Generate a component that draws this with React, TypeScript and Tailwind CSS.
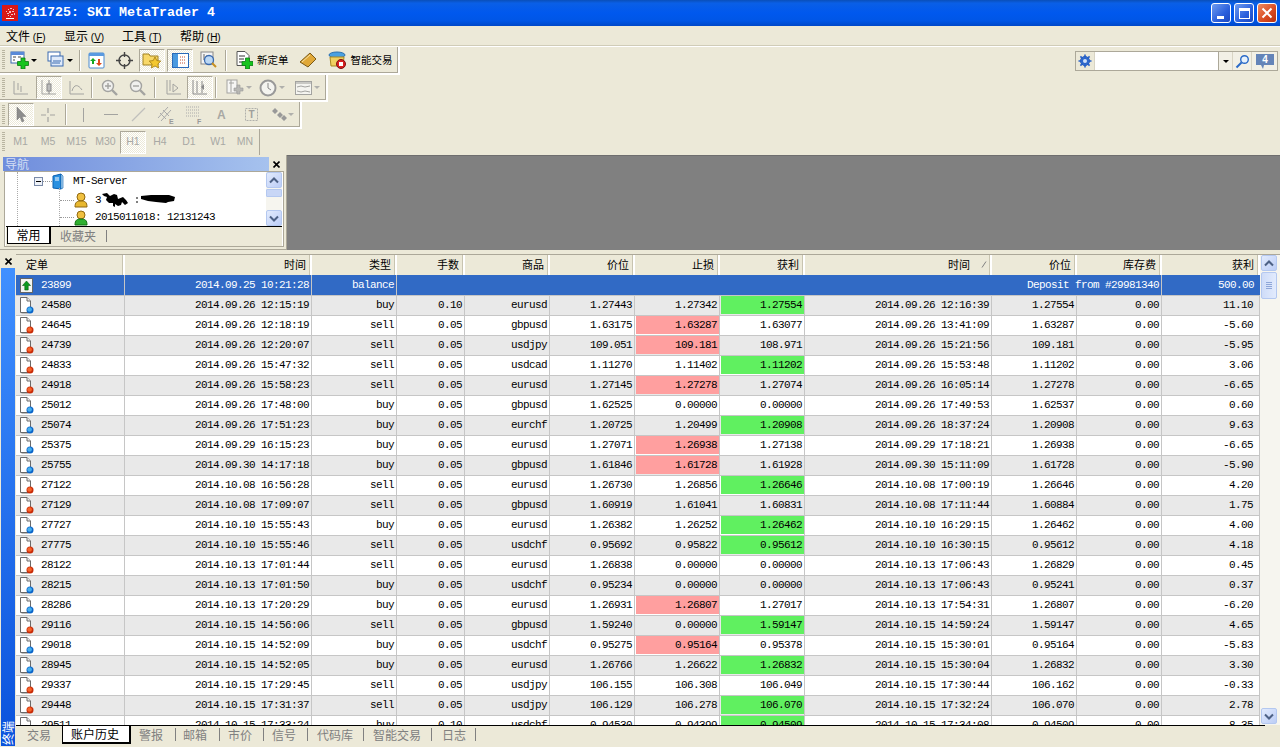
import React from "react";

const MONO = "font-['Liberation_Mono',monospace] text-[11px] tracking-[-0.6px]";
const CJK = "font-['Noto_Sans_CJK_SC','Liberation_Sans',sans-serif]";
const TOGGLED =
  "bg-[repeating-conic-gradient(#ece9d8_0%_25%,#ffffff_0%_50%)] bg-[length:2px_2px] border border-t-[#aca899] border-l-[#aca899] border-r-white border-b-white";

type Hl = "" | "sl" | "tp";
type Row = [string, string, string, string, string, string, string, string, string, string, string, string, Hl];

const rows: Row[] = [
  ["24580", "2014.09.26 12:15:19", "buy", "0.10", "eurusd", "1.27443", "1.27342", "1.27554", "2014.09.26 12:16:39", "1.27554", "0.00", "11.10", "tp"],
  ["24645", "2014.09.26 12:18:19", "sell", "0.05", "gbpusd", "1.63175", "1.63287", "1.63077", "2014.09.26 13:41:09", "1.63287", "0.00", "-5.60", "sl"],
  ["24739", "2014.09.26 12:20:07", "sell", "0.05", "usdjpy", "109.051", "109.181", "108.971", "2014.09.26 15:21:56", "109.181", "0.00", "-5.95", "sl"],
  ["24833", "2014.09.26 15:47:32", "sell", "0.05", "usdcad", "1.11270", "1.11402", "1.11202", "2014.09.26 15:53:48", "1.11202", "0.00", "3.06", "tp"],
  ["24918", "2014.09.26 15:58:23", "sell", "0.05", "eurusd", "1.27145", "1.27278", "1.27074", "2014.09.26 16:05:14", "1.27278", "0.00", "-6.65", "sl"],
  ["25012", "2014.09.26 17:48:00", "buy", "0.05", "gbpusd", "1.62525", "0.00000", "0.00000", "2014.09.26 17:49:53", "1.62537", "0.00", "0.60", ""],
  ["25074", "2014.09.26 17:51:23", "buy", "0.05", "eurchf", "1.20725", "1.20499", "1.20908", "2014.09.26 18:37:24", "1.20908", "0.00", "9.63", "tp"],
  ["25375", "2014.09.29 16:15:23", "buy", "0.05", "eurusd", "1.27071", "1.26938", "1.27138", "2014.09.29 17:18:21", "1.26938", "0.00", "-6.65", "sl"],
  ["25755", "2014.09.30 14:17:18", "buy", "0.05", "gbpusd", "1.61846", "1.61728", "1.61928", "2014.09.30 15:11:09", "1.61728", "0.00", "-5.90", "sl"],
  ["27122", "2014.10.08 16:56:28", "sell", "0.05", "eurusd", "1.26730", "1.26856", "1.26646", "2014.10.08 17:00:19", "1.26646", "0.00", "4.20", "tp"],
  ["27129", "2014.10.08 17:09:07", "sell", "0.05", "gbpusd", "1.60919", "1.61041", "1.60831", "2014.10.08 17:11:44", "1.60884", "0.00", "1.75", ""],
  ["27727", "2014.10.10 15:55:43", "buy", "0.05", "eurusd", "1.26382", "1.26252", "1.26462", "2014.10.10 16:29:15", "1.26462", "0.00", "4.00", "tp"],
  ["27775", "2014.10.10 15:55:46", "sell", "0.05", "usdchf", "0.95692", "0.95822", "0.95612", "2014.10.10 16:30:15", "0.95612", "0.00", "4.18", "tp"],
  ["28122", "2014.10.13 17:01:44", "sell", "0.05", "eurusd", "1.26838", "0.00000", "0.00000", "2014.10.13 17:06:43", "1.26829", "0.00", "0.45", ""],
  ["28215", "2014.10.13 17:01:50", "buy", "0.05", "usdchf", "0.95234", "0.00000", "0.00000", "2014.10.13 17:06:43", "0.95241", "0.00", "0.37", ""],
  ["28286", "2014.10.13 17:20:29", "buy", "0.05", "eurusd", "1.26931", "1.26807", "1.27017", "2014.10.13 17:54:31", "1.26807", "0.00", "-6.20", "sl"],
  ["29116", "2014.10.15 14:56:06", "sell", "0.05", "gbpusd", "1.59240", "0.00000", "1.59147", "2014.10.15 14:59:24", "1.59147", "0.00", "4.65", "tp"],
  ["29018", "2014.10.15 14:52:09", "buy", "0.05", "usdchf", "0.95275", "0.95164", "0.95378", "2014.10.15 15:30:01", "0.95164", "0.00", "-5.83", "sl"],
  ["28945", "2014.10.15 14:52:05", "buy", "0.05", "eurusd", "1.26766", "1.26622", "1.26832", "2014.10.15 15:30:04", "1.26832", "0.00", "3.30", "tp"],
  ["29337", "2014.10.15 17:29:45", "sell", "0.05", "usdjpy", "106.155", "106.308", "106.049", "2014.10.15 17:30:44", "106.162", "0.00", "-0.33", ""],
  ["29448", "2014.10.15 17:31:37", "sell", "0.05", "usdjpy", "106.129", "106.278", "106.070", "2014.10.15 17:32:24", "106.070", "0.00", "2.78", "tp"],
  ["29511", "2014.10.15 17:33:24", "buy", "0.10", "usdchf", "0.94530", "0.94399", "0.94509", "2014.10.15 17:34:08", "0.94509", "0.00", "8.35", "tp"],
];

const GRID =
  "grid grid-cols-[109px_187px_85px_68px_85px_85px_85px_85px_187px_85px_85px_98px] w-[1244px]";

function OrderIcon({ kind }: { kind: "buy" | "sell" }) {
  const dark = kind === "buy" ? "#0a64c8" : "#c82c08";
  const light = kind === "buy" ? "#45b0f0" : "#f8642a";
  return (
    <svg width="16" height="18" viewBox="0 0 16 18" className="shrink-0">
      <path d="M1.500 .5h6.500l3.500 3.500v11.500h-10z" fill="#fff" stroke="#6a6a6a" />
      <path d="M8 .5v3.500h3.500" fill="#eee" stroke="#6a6a6a" />
      <path d="M2.500 16.500h7" stroke="#c0c0c0" />
      <circle cx="11" cy="13" r="3.500" fill={dark} />
      <circle cx="10.600" cy="12.500" r="2.300" fill={light} />
    </svg>
  );
}

function DepositIcon() {
  return (
    <svg width="16" height="19" viewBox="0 0 16 19" className="shrink-0">
      <rect x="1.500" y="2.500" width="12" height="14" fill="#f4f4f0" stroke="#666" />
      <path d="M7.500 5l4 4.500H9.200V14H5.800V9.500H3.500z" fill="#0a9a1e" stroke="#05600f" strokeWidth=".6" />
    </svg>
  );
}

function Grip() {
  return (
    <div className="w-[3px] h-[20px] ml-[2px] shrink-0 flex flex-col gap-[1px] overflow-hidden">
      {Array.from({ length: 10 }).map((_, i) => (
        <div key={i} className="h-[1px] w-[3px] bg-[#b8b4a0] shrink-0" />
      ))}
    </div>
  );
}

function Sep({ cls }: { cls: string }) {
  return <div className={`w-[1px] h-[21px] bg-[#aca899] border-r border-r-white box-content shrink-0 ${cls}`} />;
}

function Caret({ color = "#000", cls = "" }: { color?: string; cls?: string }) {
  return (
    <svg width="6" height="3" viewBox="0 0 6 3" className={`shrink-0 ${cls}`}>
      <path d="M0 0h6L3 3z" fill={color} />
    </svg>
  );
}

const G = "#a3a3a0";

function Ic({ w = 18, h = 18, cls = "", children }: { w?: number; h?: number; cls?: string; children: React.ReactNode }) {
  return (
    <svg width={w} height={h} viewBox={`0 0 ${w} ${h}`} className={`shrink-0 ${cls}`}>
      {children}
    </svg>
  );
}

const PlusGreen = ({ x, y }: { x: number; y: number }) => (
  <path
    d={`M${x + 3.5} ${y}h4v3.5h3.5v4h-3.5v3.5h-4v-3.5h-3.5v-4h3.5z`}
    fill="#16c41e"
    stroke="#0a7a14"
    strokeWidth=".8"
  />
);

function TopBar() {
  return (
    <div className="h-[26px] shrink-0 flex items-center bg-[linear-gradient(180deg,#0a4fb8_0%,#0a5fe6_12%,#0058ee_50%,#0056e6_80%,#0048c8_100%)]">
      <svg width="16" height="16" viewBox="0 0 16 16" className="ml-[2px] shrink-0">
        <rect width="16" height="16" fill="#d81818" />
        <path
          d="M4 6h1v1H4zM6 4h1v1H6zM8 3h2v1H8zM10 6h2v1h-2zM7 6h2v2H7zM5 8h2v1H5zM9 9h2v1H9zM6 10h1v1H6zM8 11h1v1H8zM12 8h1v2h-1zM11 4h1v1h-1z"
          fill="#f4c0c0"
        />
        <path d="M4 13h8v1H4z" fill="#fff" />
      </svg>
      <span className="ml-[5px] font-['Liberation_Mono',monospace] font-bold text-[13.33px] tracking-[0px] text-white whitespace-nowrap">
        311725: SKI MetaTrader 4
      </span>
      <div className="ml-auto mr-[3px] flex gap-[3px]">
        <div className="w-[20px] h-[20px] rounded-[3px] border border-white bg-[linear-gradient(135deg,#6f9cf0,#2a5fdc_60%,#1c48c0)] flex items-end pl-[5px] pb-[3px]">
          <div className="w-[7px] h-[3px] bg-white" />
        </div>
        <div className="w-[20px] h-[20px] rounded-[3px] border border-white bg-[linear-gradient(135deg,#6f9cf0,#2a5fdc_60%,#1c48c0)] flex items-center justify-center">
          <div className="w-[11px] h-[11px] border border-white border-t-[3px]" />
        </div>
        <div className="w-[20px] h-[20px] rounded-[3px] border border-white bg-[linear-gradient(135deg,#ef8a60,#d84a20_60%,#b83010)] flex items-center justify-center">
          <svg width="12" height="12" viewBox="0 0 12 12">
            <path d="M1.500 1.500l9 9M10.500 1.500l-9 9" stroke="#fff" strokeWidth="2" />
          </svg>
        </div>
      </div>
    </div>
  );
}

function MenuBar() {
  const items: [string, string][] = [
    ["文件", "F"],
    ["显示", "V"],
    ["工具", "T"],
    ["帮助", "H"],
  ];
  return (
    <div className={`h-[21px] shrink-0 flex items-center border-b border-b-white shadow-[inset_0_-1px_0_#d0ccb8] ${CJK} text-[12px] text-black`}>
      {items.map(([t, k]) => (
        <div key={k} className="w-[58px] pl-[6px] whitespace-nowrap">
          {t}
          <span className="font-['Liberation_Sans',sans-serif] text-[10px]">
            {" ("}
            <span className="underline">{k}</span>)
          </span>
        </div>
      ))}
    </div>
  );
}

function SearchBox() {
  return (
    <div className="h-[20px] w-[203px] mr-[2px] flex border border-[#aca899] bg-[#ece9d8]">
      <div className="w-[19px] border-r border-r-[#d8d4c4] flex items-center justify-center">
        <svg width="14" height="14" viewBox="0 0 14 14">
          <circle cx="7" cy="7" r="4.500" fill="#3a78d8" stroke="#1c50b0" />
          <path d="M7 .5v13M.5 7h13M2.400 2.400l9.200 9.200M11.600 2.400l-9.200 9.200" stroke="#2a62c8" strokeWidth="1.600" />
          <circle cx="7" cy="7" r="2" fill="#cfe0f8" />
        </svg>
      </div>
      <div className="w-[124px] bg-white border-r border-r-[#aca899]" />
      <div className="w-[14px] flex items-center justify-center border-r border-r-[#d8d4c4] bg-[#f2f0e6]">
        <Caret />
      </div>
      <div className="w-[19px] flex items-center justify-center border-r border-r-[#d8d4c4] bg-[#f2f0e6]">
        <svg width="15" height="15" viewBox="0 0 15 15">
          <circle cx="9.500" cy="5.500" r="3.800" fill="#e8f2fc" stroke="#2a6ac8" strokeWidth="1.400" />
          <path d="M6.500 8.500L1.500 13.500" stroke="#2a6ac8" strokeWidth="2" />
        </svg>
      </div>
      <div className="flex-1 flex items-center justify-center bg-[#f2f0e6]">
        <svg width="20" height="17" viewBox="0 0 20 17">
          <path d="M1 1h18v11H9l-1 4-2-4H1z" fill="#6484b8" />
          <text x="10" y="10" textAnchor="middle" fontSize="10" fontWeight="700" fill="#fff" fontFamily="Liberation Sans">4</text>
        </svg>
      </div>
    </div>
  );
}

function ToolRow1() {
  return (
    <div className="h-[28px] shrink-0 flex items-center">
      <div className={`h-[28px] w-[400px] flex items-center border-r-2 border-b-2 border-r-white border-b-white shadow-[inset_-1px_-1px_0_#aca899] ${CJK} text-[10.5px]`}>
        <Grip />
        <Ic w={19} h={18} cls="ml-[5px]">
          <rect x="1" y="1" width="13" height="11" fill="#fff" stroke="#3a6ab0" />
          <rect x="1" y="1" width="13" height="3" fill="#5a8ad8" />
          <path d="M3 6h3M3 9h2M8 6h3" stroke="#444" />
          <PlusGreen x={7.5} y={7} />
        </Ic>
        <Caret cls="ml-[2px]" />
        <Ic w={18} h={18} cls="ml-[10px]">
          <rect x="1" y="1" width="12" height="9" fill="#fff" stroke="#3a6ab0" />
          <rect x="4" y="5" width="12" height="10" fill="#dfeafa" stroke="#3a6ab0" />
          <path d="M6 10h8M5 12h8" stroke="#3a6ab0" />
        </Ic>
        <Caret cls="ml-[2px]" />
        <Sep cls="ml-[6px]" />
        <Ic w={17} h={17} cls="ml-[7px]">
          <rect x="1" y="1" width="15" height="15" rx="1" fill="#fff" stroke="#4a8ad0" />
          <rect x="1" y="1" width="15" height="3" fill="#5a9ae0" />
          <path d="M5 6l3 3H6v3H4V9H2z" fill="#12a820" />
          <path d="M11 14l-3-3h2V7h2v4h2z" fill="#e04818" />
        </Ic>
        <Ic w={17} h={17} cls="ml-[11px]">
          <circle cx="8.500" cy="8.500" r="5.500" fill="none" stroke="#444" strokeWidth="1.400" />
          <path d="M8.500 0v5M8.500 12v5M0 8.500h5M12 8.500h5" stroke="#444" strokeWidth="1.400" />
        </Ic>
        <div className={`ml-[6px] w-[26px] h-[23px] flex items-center justify-center ${TOGGLED}`}>
          <Ic w={20} h={18}>
            <path d="M1 3h6l1 2h8v9H1z" fill="#f8d868" stroke="#a08020" />
            <path d="M13 6l1.800 3.600 4 .5-2.900 2.800.7 4-3.600-1.900-3.600 1.900.7-4-2.900-2.800 4-.5z" fill="#f4c830" stroke="#a07810" strokeWidth=".8" />
          </Ic>
        </div>
        <div className={`ml-[2px] w-[26px] h-[23px] flex items-center justify-center ${TOGGLED}`}>
          <Ic w={17} h={15}>
            <rect x=".5" y=".5" width="16" height="14" fill="#fff" stroke="#2a6ab8" />
            <rect x="1" y="1" width="5" height="13" fill="#4a9ae0" />
            <path d="M8 4h6M8 7h6M8 10h6" stroke="#c05030" strokeDasharray="1 1" />
          </Ic>
        </div>
        <Ic w={18} h={18} cls="ml-[7px]">
          <rect x="1" y="1" width="12" height="12" fill="#f4f4f4" stroke="#888" />
          <path d="M4 3v6M7 4v6" stroke="#666" />
          <circle cx="9" cy="9" r="4.500" fill="#bcd8f4" stroke="#3a6ab0" strokeWidth="1.300" />
          <path d="M12 12l4 4" stroke="#c89020" strokeWidth="2" />
        </Ic>
        <Sep cls="ml-[7px]" />
        <Ic w={18} h={18} cls="ml-[8px]">
          <path d="M2 .5h8l4 4v10H2z" fill="#fff" stroke="#555" />
          <path d="M4 5h6M4 8h5M4 11h3" stroke="#333" />
          <PlusGreen x={7} y={7} />
        </Ic>
        <span className="ml-[4px] whitespace-nowrap text-black">新定单</span>
        <Ic w={18} h={16} cls="ml-[10px]">
          <path d="M1 10l10-9 6 6-8 8z" fill="#e0a838" stroke="#7a5a18" />
          <path d="M3 10l8-7" stroke="#f8e0a0" />
        </Ic>
        <Ic w={19} h={18} cls="ml-[11px]">
          <ellipse cx="9" cy="4" rx="8" ry="3" fill="#4aa0e0" stroke="#2a70b0" />
          <path d="M2 6h14l-1 9H3z" fill="#f0d060" stroke="#a88820" />
          <circle cx="13" cy="13" r="4.500" fill="#d82020" stroke="#801010" />
          <rect x="11" y="11" width="4" height="4" fill="#fff" />
        </Ic>
        <span className="ml-[4px] whitespace-nowrap text-black">智能交易</span>
      </div>
      <div className="ml-auto">
        <SearchBox />
      </div>
    </div>
  );
}

function ToolRow2() {
  return (
    <div className="h-[27px] w-[328px] shrink-0 flex items-center border-r-2 border-b-2 border-r-white border-b-white shadow-[inset_-1px_-1px_0_#aca899]">
      <Grip />
      <Ic cls="ml-[7px]">
        <path d="M2 2v13h14M6 4v7M9 7v6" stroke={G} fill="none" />
      </Ic>
      <div className={`ml-[6px] w-[26px] h-[23px] flex items-center justify-center ${TOGGLED}`}>
        <Ic>
          <path d="M2 1v14h14" stroke={G} fill="none" />
          <rect x="7" y="5" width="4" height="7" fill="#bbb" stroke="#888" />
          <path d="M9 1v4M9 12v3" stroke="#888" />
        </Ic>
      </div>
      <Ic cls="ml-[6px]">
        <path d="M2 2v13h14" stroke={G} fill="none" />
        <path d="M4 12c2-7 6-7 10-1" stroke={G} fill="none" />
      </Ic>
      <Sep cls="ml-[5px]" />
      <Ic cls="ml-[8px]">
        <circle cx="7" cy="7" r="5.500" fill="#f0f0ee" stroke={G} strokeWidth="1.400" />
        <path d="M4 7h6M7 4v6" stroke={G} strokeWidth="1.400" />
        <path d="M11 11l5 5" stroke={G} strokeWidth="2.400" />
      </Ic>
      <Ic cls="ml-[10px]">
        <circle cx="7" cy="7" r="5.500" fill="#f0f0ee" stroke={G} strokeWidth="1.400" />
        <path d="M4 7h6" stroke={G} strokeWidth="1.400" />
        <path d="M11 11l5 5" stroke={G} strokeWidth="2.400" />
      </Ic>
      <Sep cls="ml-[7px]" />
      <Ic cls="ml-[9px]">
        <path d="M2 1v14h14M5 1v11" stroke={G} fill="none" />
        <path d="M8 5l5 4-5 4z" fill="none" stroke={G} />
      </Ic>
      <div className={`ml-[4px] w-[26px] h-[23px] flex items-center justify-center ${TOGGLED}`}>
        <Ic>
          <path d="M2 1v14h14M6 2v12M11 2v12" stroke="#888" fill="none" />
          <path d="M13 5l-3 3 3 3z" fill="#888" />
        </Ic>
      </div>
      <Sep cls="ml-[2px]" />
      <Ic cls="ml-[9px]">
        <rect x="1" y="1" width="10" height="13" fill="#f6f6f4" stroke={G} />
        <path d="M3 4h5M5 1v12" stroke={G} />
        <path d="M8 9h3V6h3v3h3v3h-3v3h-3v-3H8z" fill="#b8b8b4" stroke="#999" strokeWidth=".6" />
      </Ic>
      <Caret color="#b0b0ac" cls="ml-[2px]" />
      <Ic cls="ml-[7px]">
        <circle cx="9" cy="9" r="7.500" fill="#f4f4f0" stroke="#999" strokeWidth="2" />
        <path d="M9 4v5l3 2" stroke="#888" fill="none" />
      </Ic>
      <Caret color="#b0b0ac" cls="ml-[2px]" />
      <Ic cls="ml-[10px]">
        <rect x=".5" y="2.500" width="16" height="13" fill="#f4f4f0" stroke={G} />
        <rect x="1" y="3" width="15" height="2" fill="#c8c8c4" />
        <path d="M2 8l4-1 4 1 5-1M2 12l4 1 4-1 5 1" stroke={G} fill="none" />
      </Ic>
      <Caret color="#b0b0ac" cls="ml-[1px]" />
    </div>
  );
}

function ToolRow3() {
  return (
    <div className="h-[27px] w-[302px] shrink-0 flex items-center border-r-2 border-b-2 border-r-white border-b-white shadow-[inset_-1px_-1px_0_#aca899]">
      <Grip />
      <div className={`ml-[3px] w-[26px] h-[23px] flex items-center justify-center ${TOGGLED}`}>
        <Ic w={12} h={17}>
          <path d="M2 1v13l3-3 2 5 2-1-2-4.500 4 0z" fill="#8c8c8c" stroke="#777" strokeWidth=".5" />
        </Ic>
      </div>
      <Ic w={16} h={16} cls="ml-[6px]">
        <path d="M8 1v5M8 10v5M1 8h5M10 8h5" stroke={G} strokeWidth="1.200" />
      </Ic>
      <Sep cls="ml-[9px]" />
      <Ic w={3} h={14} cls="ml-[15px]">
        <path d="M1.500 0v14" stroke={G} />
      </Ic>
      <Ic w={14} h={3} cls="ml-[19px]">
        <path d="M0 1.500h14" stroke={G} />
      </Ic>
      <Ic w={15} h={15} cls="ml-[13px]">
        <path d="M1 14L14 1" stroke="#c0c0bc" strokeWidth="1.200" />
      </Ic>
      <Ic w={18} h={18} cls="ml-[11px]">
        <path d="M1 12L11 1M4 15L14 4M3 7l6 6M6 4l6 6" stroke="#aaa" />
        <text x="12" y="18" fontSize="7" fontWeight="700" fill="#999" fontFamily="Liberation Sans">E</text>
      </Ic>
      <Ic w={18} h={18} cls="ml-[11px]">
        <path d="M0 1h14M0 4h14M0 7h14M0 10h14" stroke="#aaa" strokeDasharray="1 1" />
        <text x="11" y="18" fontSize="7" fontWeight="700" fill="#999" fontFamily="Liberation Sans">F</text>
      </Ic>
      <span className="ml-[13px] w-[14px] font-['Liberation_Sans',sans-serif] font-bold text-[12px] text-[#a8a8a4]">A</span>
      <Ic w={15} h={15} cls="ml-[13px]">
        <rect x="1.500" y="1.500" width="12" height="12" fill="none" stroke="#b0b0ac" strokeDasharray="2 1" />
        <text x="7.500" y="11" textAnchor="middle" fontSize="10" fontWeight="700" fill="#a0a09c" fontFamily="Liberation Sans">T</text>
      </Ic>
      <Ic w={15} h={13} cls="ml-[13px]">
        <path d="M3 0l3 3-3 3-3-3zM8 4l3 3-3 3-3-3zM12 7l3 3-3 3-3-3z" fill="#999" />
      </Ic>
      <Caret color="#b0b0ac" cls="ml-[1px]" />
    </div>
  );
}

function ToolRow4() {
  const labels: { t: string; cls: string }[] = [
    { t: "M1", cls: "w-[27px]" },
    { t: "M5", cls: "w-[28px]" },
    { t: "M15", cls: "w-[29px]" },
    { t: "M30", cls: "w-[29px]" },
  ];
  const rest: { t: string; cls: string }[] = [
    { t: "H4", cls: "w-[28px]" },
    { t: "D1", cls: "w-[30px]" },
    { t: "W1", cls: "w-[28px]" },
    { t: "MN", cls: "w-[26px]" },
  ];
  return (
    <div className="h-[26px] w-[260px] shrink-0 flex items-center border-r border-r-[#aca899] font-['Liberation_Sans',sans-serif] text-[10.5px] text-[#a8a8a4]">
      <Grip />
      <div className="ml-[2px] flex">
        {labels.map((l) => (
          <div key={l.t} className={`${l.cls} text-center`}>
            {l.t}
          </div>
        ))}
      </div>
      <div className={`w-[26px] h-[23px] flex items-center justify-center ${TOGGLED}`}>H1</div>
      <div className="flex">
        {rest.map((l) => (
          <div key={l.t} className={`${l.cls} text-center`}>
            {l.t}
          </div>
        ))}
      </div>
    </div>
  );
}

function ScrollBtn({ dir, cls = "" }: { dir: "up" | "down"; cls?: string }) {
  return (
    <div className={`w-[16px] h-[16px] rounded-[2px] border border-[#b4c8f0] bg-[linear-gradient(135deg,#e2ebfd,#bccdf6)] flex items-center justify-center ${cls}`}>
      <svg width="10" height="7" viewBox="0 0 10 7">
        <path d={dir === "up" ? "M1 5.500L5 1.500l4 4" : "M1 1.500L5 5.500l4-4"} fill="none" stroke="#4d6185" strokeWidth="2" />
      </svg>
    </div>
  );
}

function UserIcon({ green }: { green?: boolean }) {
  return (
    <svg width="14" height="16" viewBox="0 0 14 16" className="shrink-0">
      <circle cx="7" cy="5" r="4" fill="#f0c040" stroke="#906810" />
      <path
        d="M1 15c0-5 2-6 6-6s6 1 6 6z"
        fill={green ? "#30b030" : "#e8b830"}
        stroke={green ? "#107010" : "#906810"}
      />
    </svg>
  );
}

function Navigator() {
  return (
    <div className="h-[95px] shrink-0 flex">
      <div className="w-[287px] h-[95px] shrink-0 border-r border-r-[#aca899] border-b border-b-[#aca899] pl-[3px] pt-[2px] flex flex-col">
        <div className="flex items-center h-[14px]">
          <div className={`w-[266px] h-[14px] bg-[linear-gradient(90deg,#6f8ddc,#a6c2ee)] ${CJK} text-[12px] leading-[14px] text-[#d4def4] pl-[2px]`}>
            导航
          </div>
          <div className="flex-1 flex justify-center pr-[2px]">
            <svg width="7" height="7" viewBox="0 0 7 7">
              <path d="M.5.5l6 6M6.500.5l-6 6" stroke="#000" strokeWidth="1.600" />
            </svg>
          </div>
        </div>
        <div className="w-[280px] h-[76px] ml-[1px] border border-[#aca899] bg-white flex flex-col">
          <div className="h-[54px] flex overflow-hidden">
            <div className={`flex-1 relative ${MONO} text-black`}>
              <div className="absolute left-[12px] top-0 h-[54px] border-l border-dotted border-l-[#aaa]" />
              <div className="absolute left-[54px] top-[16px] h-[38px] border-l border-dotted border-l-[#aaa]" />
              <div className="h-[19px] flex items-center pl-[29px]">
                <div className="w-[9px] h-[9px] border border-[#7a8aa8] bg-[#eef2f8] flex items-center justify-center shrink-0">
                  <div className="w-[5px] h-[1px] bg-black" />
                </div>
                <div className="w-[9px] border-t border-dotted border-[#999]" />
                <svg width="12" height="17" viewBox="0 0 12 17" className="shrink-0">
                  <path d="M1 3l8-2v15l-8-1z" fill="#2a90e0" stroke="#0a60b0" />
                  <path d="M9 1l2 2v12l-2 1z" fill="#b0d8f4" stroke="#0a60b0" strokeWidth=".6" />
                  <path d="M3 5h4M3 7h4" stroke="#fff" />
                </svg>
                <span className="ml-[9px]">MT-Server</span>
              </div>
              <div className="h-[18px] flex items-center pl-[55px]">
                <div className="w-[14px] border-t border-dotted border-[#999]" />
                <UserIcon />
                <span className="ml-[7px]">3</span>
                <svg width="76" height="16" viewBox="0 0 76 16" className="shrink-0">
                  <path
                    d="M1 2l5-1 3 3 4-2 3 1 1 4 5-2 3 3 2 3-3 2-3-3-1 3-3 1-3-2 0 3-2-1 0-3-4 0-3-3 1-3-3-1zM40 4l10-1 8 0 10 0 6 2-1 4-6 1-2 1-10-1-8-1-7-2z"
                    fill="#000"
                  />
                  <path d="M35 6h2M35 10h2" stroke="#000" />
                </svg>
              </div>
              <div className="h-[17px] flex items-center pl-[55px]">
                <div className="w-[14px] border-t border-dotted border-[#999]" />
                <UserIcon green />
                <span className="ml-[7px]">2015011018: 12131243</span>
              </div>
            </div>
            <div className="w-[16px] mr-[1px] flex flex-col items-center bg-[#f6f5ef]">
              <ScrollBtn dir="up" />
              <div className="w-[16px] h-[8px] mt-[1px] rounded-[1px] border border-[#b4c8f0] bg-[#c8d6f6]" />
              <div className="flex-1" />
              <ScrollBtn dir="down" />
            </div>
          </div>
          <div className={`mx-[1px] flex-1 border-t border-t-black bg-[#ece9d8] flex items-start ${CJK} text-[12px]`}>
            <div className="ml-[1px] w-[44px] h-[17px] bg-white border-l border-r-2 border-b border-black text-center leading-[16px] text-black">
              常用
            </div>
            <span className="ml-[9px] leading-[17px] text-[#808080]">收藏夹</span>
            <span className="ml-[10px] mt-[3px] w-[1px] h-[12px] bg-[#808080]" />
          </div>
        </div>
      </div>
      <div className="flex-1 bg-[#808080] border-t border-t-[#6e6e6e]" />
    </div>
  );
}

function HeaderCell({ t, left, sort }: { t: string; left?: boolean; sort?: boolean }) {
  return (
    <div
      className={`h-[20px] pb-[1px] flex items-center border-r-2 border-r-white shadow-[inset_-1px_0_0_#c8c4b0] ${left ? "justify-start pl-[10px]" : "justify-end pr-[4px]"} ${CJK} text-[11px] text-black whitespace-nowrap`}
    >
      {t}
      {sort && (
        <svg width="6" height="7" viewBox="0 0 6 7" className="ml-[11px] mr-[-1px]">
          <path d="M1 6.500L5 .5" stroke="#808080" />
        </svg>
      )}
    </div>
  );
}

function Cell({ children, cls = "", left }: { children?: React.ReactNode; cls?: string; left?: boolean }) {
  return (
    <div className={`h-[20px] flex items-center whitespace-nowrap border-r border-t border-[#c6c6c6] ${left ? "justify-start" : "justify-end pr-[2px]"} ${cls}`}>
      {children}
    </div>
  );
}

function ColorCell({ v, color }: { v: string; color: string }) {
  return (
    <div className="h-[20px] border-r border-t border-[#c6c6c6] pl-[1px]">
      <div className={`h-[18px] flex items-center justify-end pr-[2px] ${color}`}>{v}</div>
    </div>
  );
}

function Table() {
  const heads = ["定单", "时间", "类型", "手数", "商品", "价位", "止损", "获利", "时间", "价位", "库存费", "获利"];
  return (
    <div className="flex-1 min-h-0 flex">
      <div className="w-[1244px] shrink-0 flex flex-col overflow-hidden">
        <div className={GRID}>
          {heads.map((h, i) => (
            <HeaderCell key={i} t={h} left={i === 0} sort={i === 8} />
          ))}
        </div>
        <div className={`${MONO} text-black overflow-hidden flex-1`}>
          <div className={`${GRID} bg-[#316ac5] text-white`}>
            <div className="h-[20px] flex items-center pl-[3px] border-r border-r-[#c6c6c6]">
              <DepositIcon />
              <span className="ml-[6px] pt-[1px]">23899</span>
            </div>
            <div className="h-[20px] pt-[1px] flex items-center justify-end pr-[2px] border-r border-r-[#c6c6c6]">2014.09.25 10:21:28</div>
            <div className="h-[20px] pt-[1px] flex items-center justify-end pr-[2px] border-r border-r-[#c6c6c6]">balance</div>
            <div className="col-span-8 h-[20px] pt-[1px] flex items-center justify-end pr-[2px] border-r border-r-[#c6c6c6]">
              Deposit from #29981340
            </div>
            <div className="h-[20px] pt-[1px] flex items-center justify-end pr-[6px]">500.00</div>
          </div>
          {rows.map((r, i) => {
            const bg = i % 2 === 0 ? "bg-[#e9e9e9]" : "bg-white";
            return (
              <div key={r[0]} className={`${GRID} ${bg}`}>
                <Cell left cls="pl-[3px]">
                  <OrderIcon kind={r[2] === "buy" ? "buy" : "sell"} />
                  <span className="ml-[6px]">{r[0]}</span>
                </Cell>
                <Cell>{r[1]}</Cell>
                <Cell>{r[2]}</Cell>
                <Cell>{r[3]}</Cell>
                <Cell>{r[4]}</Cell>
                <Cell>{r[5]}</Cell>
                {r[12] === "sl" ? <ColorCell v={r[6]} color="bg-[#ff9f9f]" /> : <Cell>{r[6]}</Cell>}
                {r[12] === "tp" ? <ColorCell v={r[7]} color="bg-[#60f060]" /> : <Cell>{r[7]}</Cell>}
                <Cell>{r[8]}</Cell>
                <Cell>{r[9]}</Cell>
                <Cell>{r[10]}</Cell>
                <Cell cls="pr-[6px]">{r[11]}</Cell>
              </div>
            );
          })}
        </div>
      </div>
      <div className="flex-1 flex flex-col pl-[1px] bg-[#f6f5ef]">
        <ScrollBtn dir="up" />
        <div className="mt-[1px] w-[16px] h-[27px] rounded-[2px] border border-[#b4c8f0] bg-[linear-gradient(90deg,#cfdcf8,#e2ebfd)] flex flex-col items-center justify-center gap-[1px]">
          <div className="w-[6px] h-[1px] bg-[#8ea6d8]" />
          <div className="w-[6px] h-[1px] bg-[#8ea6d8]" />
          <div className="w-[6px] h-[1px] bg-[#8ea6d8]" />
          <div className="w-[6px] h-[1px] bg-[#8ea6d8]" />
        </div>
        <div className="flex-1" />
        <ScrollBtn dir="down" cls="mb-[1px]" />
      </div>
    </div>
  );
}

function BottomTabs() {
  const pipe = "w-[1px] h-[13px] bg-[#808080] shrink-0";
  return (
    <div className={`h-[22px] shrink-0 bg-[#ece9d8] ${CJK} text-[12px] text-[#808080] leading-[17px] whitespace-nowrap`}>
      <div className="w-[1249px] h-[21px] flex items-start border-t border-t-black">
        <span className="ml-[11px] w-[35px]">交易</span>
        <div className="w-[69px] h-[18px] bg-white border-l border-r-2 border-b-2 border-black text-black text-center leading-[16px] pr-[2px]">账户历史</div>
        <span className="ml-[8px] w-[36px]">警报</span>
        <span className={`${pipe} mt-[2px]`} />
        <span className="ml-[7px] w-[36px]">邮箱</span>
        <span className={`${pipe} mt-[2px]`} />
        <span className="ml-[8px] w-[35px]">市价</span>
        <span className={`${pipe} mt-[2px]`} />
        <span className="ml-[8px] w-[35px]">信号</span>
        <span className={`${pipe} mt-[2px]`} />
        <span className="ml-[9px] w-[46px]">代码库</span>
        <span className={`${pipe} mt-[2px]`} />
        <span className="ml-[9px] w-[58px]">智能交易</span>
        <span className={`${pipe} mt-[2px]`} />
        <span className="ml-[10px] w-[33px]">日志</span>
        <span className={`${pipe} mt-[2px]`} />
      </div>
    </div>
  );
}

function Terminal() {
  return (
    <div className="flex-1 min-h-0 flex pt-[4px]">
      <div className="w-[16px] shrink-0 flex flex-col items-center">
        <div className="h-[14px] flex items-center">
          <svg width="7" height="7" viewBox="0 0 7 7">
            <path d="M.5.5l6 6M6.500.5l-6 6" stroke="#000" strokeWidth="1.600" />
          </svg>
        </div>
        <div className={`w-[14px] flex-1 mb-[1px] bg-[linear-gradient(180deg,#4090ff,#0a52dc)] flex items-end justify-center ${CJK} text-[12px] text-white`}>
          <span className="block h-[26px] w-[14px] [writing-mode:vertical-lr] [text-orientation:sideways] rotate-180 leading-[14px] text-center">终端</span>
        </div>
      </div>
      <div className="flex-1 min-w-0 flex flex-col border-t border-t-[#aca899]">
        <Table />
        <BottomTabs />
      </div>
    </div>
  );
}

export default function App() {
  return (
    <div className="h-[747px] w-[1280px] flex flex-col overflow-hidden bg-[#ece9d8]">
      <TopBar />
      <MenuBar />
      <ToolRow1 />
      <ToolRow2 />
      <ToolRow3 />
      <ToolRow4 />
      <Navigator />
      <Terminal />
    </div>
  );
}
